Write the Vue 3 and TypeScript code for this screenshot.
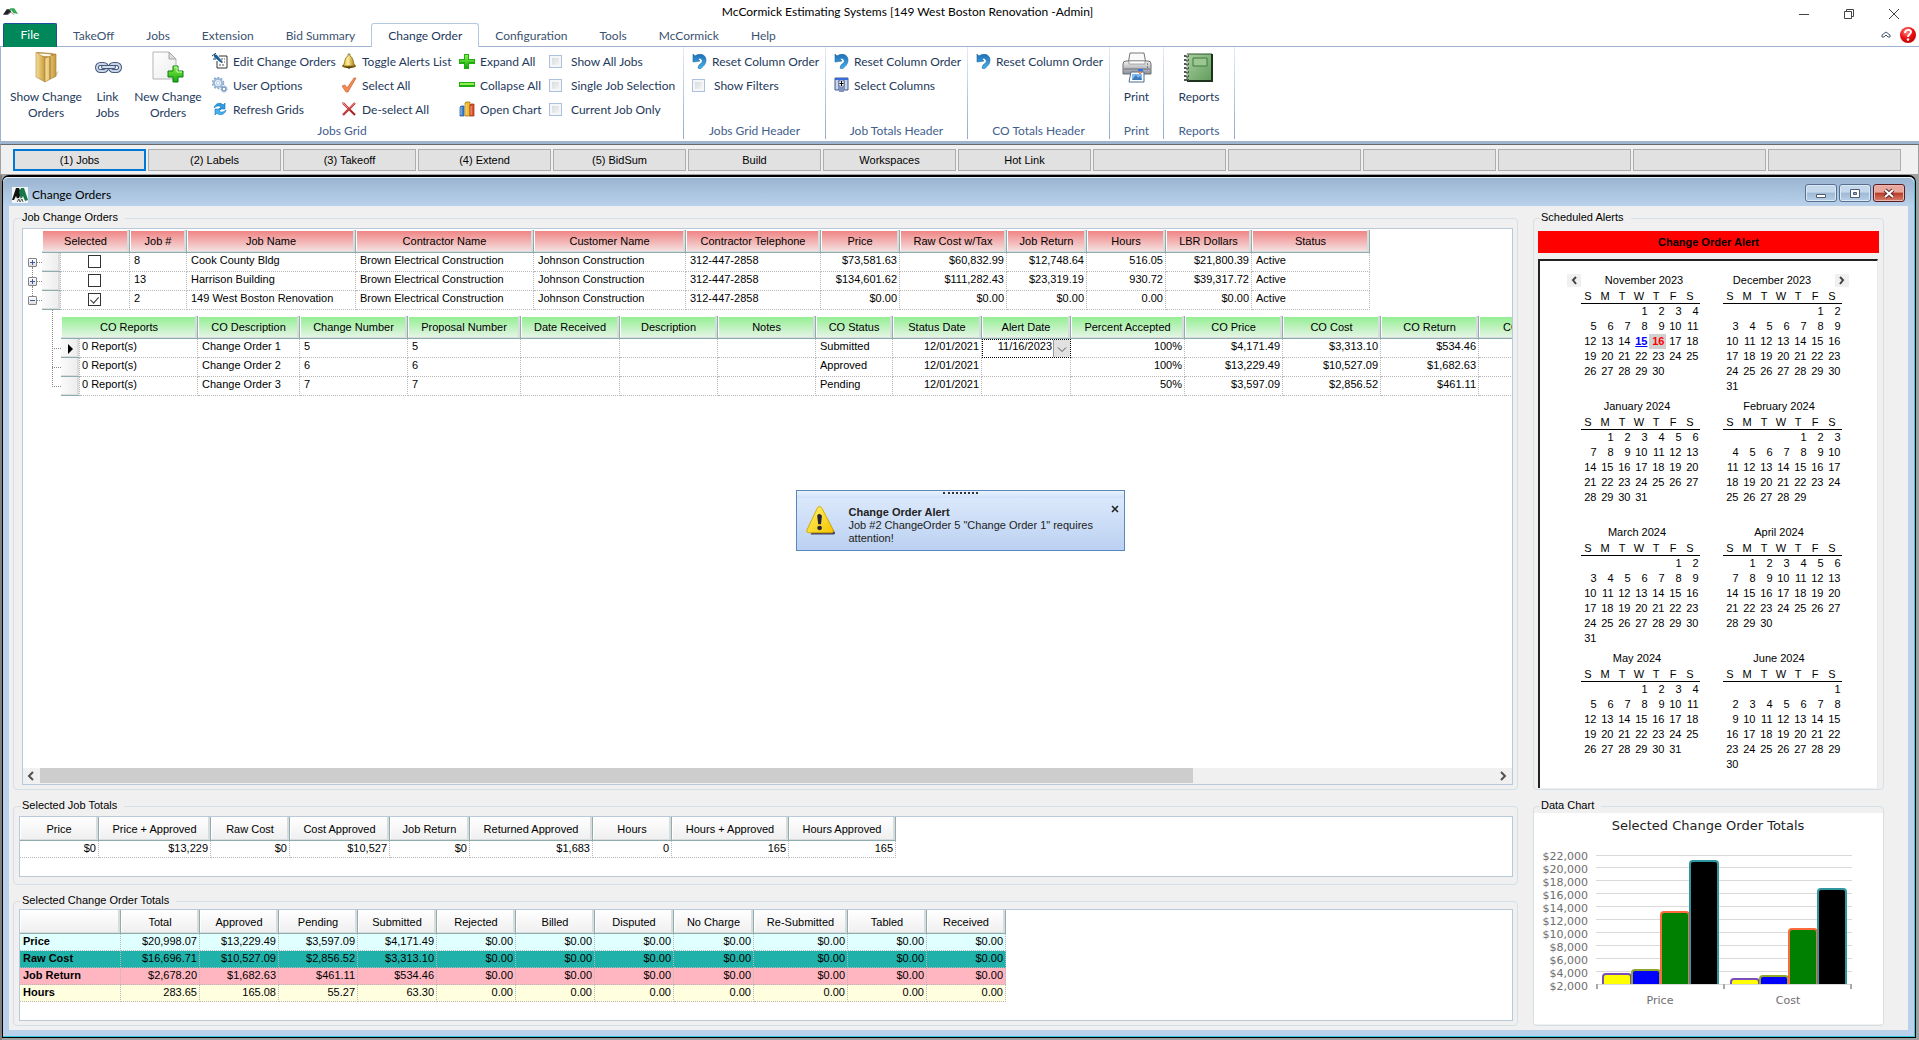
<script setup lang="ts">
import { ref } from 'vue'

interface Column {
  label: string
  width: number
  align?: 'right'
}

interface Command {
  label: string
  icon?: string
}

interface Month {
  name: string
  offset: number
  days: number
}

const tabs = ['TakeOff', 'Jobs', 'Extension', 'Bid Summary', 'Change Order', 'Configuration', 'Tools', 'McCormick', 'Help']
const activeTab = ref('Change Order')

const bigCommands = [
  { lines: ['Show Change', 'Orders'], icon: 'folder', size: 'wide' },
  { lines: ['Link', 'Jobs'], icon: 'link', size: 'narrow' },
  { lines: ['New Change', 'Orders'], icon: 'newdoc', size: 'medium' },
]

const jobCommands: Command[][] = [
  [{ label: 'Edit Change Orders', icon: 'edit' }, { label: 'User Options', icon: 'gears' }, { label: 'Refresh Grids', icon: 'refresh' }],
  [{ label: 'Toggle Alerts List', icon: 'bell' }, { label: 'Select All', icon: 'check' }, { label: 'De-select All', icon: 'cross' }],
  [{ label: 'Expand All', icon: 'plus' }, { label: 'Collapse All', icon: 'minus' }, { label: 'Open Chart', icon: 'bars' }],
]
const jobToggles = ['Show All Jobs', 'Single Job Selection', 'Current Job Only']

const navButtons = ['(1) Jobs', '(2) Labels', '(3) Takeoff', '(4) Extend', '(5) BidSum', 'Build', 'Workspaces', 'Hot Link', '', '', '', '', '', '']

const jobColumns: Column[] = [
  { label: 'Job #', width: 57 },
  { label: 'Job Name', width: 169 },
  { label: 'Contractor Name', width: 178 },
  { label: 'Customer Name', width: 152 },
  { label: 'Contractor Telephone', width: 135 },
  { label: 'Price', width: 79, align: 'right' },
  { label: 'Raw Cost w/Tax', width: 107, align: 'right' },
  { label: 'Job Return', width: 80, align: 'right' },
  { label: 'Hours', width: 79, align: 'right' },
  { label: 'LBR Dollars', width: 86, align: 'right' },
  { label: 'Status', width: 118 },
]
const jobs = ref([
  { selected: false, open: false, cells: ['8', 'Cook County Bldg', 'Brown Electrical Construction', 'Johnson Construction', '312-447-2858', '$73,581.63', '$60,832.99', '$12,748.64', '516.05', '$21,800.39', 'Active'] },
  { selected: false, open: false, cells: ['13', 'Harrison Building', 'Brown Electrical Construction', 'Johnson Construction', '312-447-2858', '$134,601.62', '$111,282.43', '$23,319.19', '930.72', '$39,317.72', 'Active'] },
  { selected: true, open: true, cells: ['2', '149 West Boston Renovation', 'Brown Electrical Construction', 'Johnson Construction', '312-447-2858', '$0.00', '$0.00', '$0.00', '0.00', '$0.00', 'Active'] },
])

const orderColumns: Column[] = [
  { label: 'CO Reports', width: 118 },
  { label: 'CO Description', width: 102 },
  { label: 'Change Number', width: 108 },
  { label: 'Proposal Number', width: 113 },
  { label: 'Date Received', width: 99 },
  { label: 'Description', width: 98 },
  { label: 'Notes', width: 98 },
  { label: 'CO Status', width: 77 },
  { label: 'Status Date', width: 89, align: 'right' },
  { label: 'Alert Date', width: 89, align: 'right' },
  { label: 'Percent Accepted', width: 114, align: 'right' },
  { label: 'CO Price', width: 98, align: 'right' },
  { label: 'CO Cost', width: 98, align: 'right' },
  { label: 'CO Return', width: 98, align: 'right' },
  { label: 'CO Hours', width: 98, align: 'right' },
]
const alertColumn = 9
const orders = [
  ['0 Report(s)', 'Change Order 1', '5', '5', '', '', '', 'Submitted', '12/01/2021', '11/16/2023', '100%', '$4,171.49', '$3,313.10', '$534.46', ''],
  ['0 Report(s)', 'Change Order 2', '6', '6', '', '', '', 'Approved', '12/01/2021', '', '100%', '$13,229.49', '$10,527.09', '$1,682.63', ''],
  ['0 Report(s)', 'Change Order 3', '7', '7', '', '', '', 'Pending', '12/01/2021', '', '50%', '$3,597.09', '$2,856.52', '$461.11', ''],
]

const totalColumns: Column[] = [
  { label: 'Price', width: 79 },
  { label: 'Price + Approved', width: 112 },
  { label: 'Raw Cost', width: 79 },
  { label: 'Cost Approved', width: 100 },
  { label: 'Job Return', width: 80 },
  { label: 'Returned Approved', width: 123 },
  { label: 'Hours', width: 79 },
  { label: 'Hours + Approved', width: 117 },
  { label: 'Hours Approved', width: 107 },
]
const totals = ['$0', '$13,229', '$0', '$10,527', '$0', '$1,683', '0', '165', '165']

const statusColumns: Column[] = [
  { label: 'Total', width: 79 },
  { label: 'Approved', width: 79 },
  { label: 'Pending', width: 79 },
  { label: 'Submitted', width: 79 },
  { label: 'Rejected', width: 79 },
  { label: 'Billed', width: 79 },
  { label: 'Disputed', width: 79 },
  { label: 'No Charge', width: 80 },
  { label: 'Re-Submitted', width: 94 },
  { label: 'Tabled', width: 79 },
  { label: 'Received', width: 79 },
]
const zeros = (text: string) => Array<string>(7).fill(text)
const statusRows = [
  { name: 'Price', tone: 'cyan', values: ['$20,998.07', '$13,229.49', '$3,597.09', '$4,171.49', ...zeros('$0.00')] },
  { name: 'Raw Cost', tone: 'teal', values: ['$16,696.71', '$10,527.09', '$2,856.52', '$3,313.10', ...zeros('$0.00')] },
  { name: 'Job Return', tone: 'pink', values: ['$2,678.20', '$1,682.63', '$461.11', '$534.46', ...zeros('$0.00')] },
  { name: 'Hours', tone: 'cream', values: ['283.65', '165.08', '55.27', '63.30', ...zeros('0.00')] },
]

const weekdays = ['S', 'M', 'T', 'W', 'T', 'F', 'S']
const months: Month[] = [
  { name: 'November 2023', offset: 3, days: 30 },
  { name: 'December 2023', offset: 5, days: 31 },
  { name: 'January 2024', offset: 1, days: 31 },
  { name: 'February 2024', offset: 4, days: 29 },
  { name: 'March 2024', offset: 5, days: 31 },
  { name: 'April 2024', offset: 1, days: 30 },
  { name: 'May 2024', offset: 3, days: 31 },
  { name: 'June 2024', offset: 6, days: 30 },
]

function dayAt(month: Month, week: number, column: number): number | string {
  const day = (week - 1) * 7 + column - month.offset
  return day >= 1 && day <= month.days ? day : ''
}

function dayClass(month: Month, day: number | string) {
  if (month !== months[0]) return ''
  return day === 15 ? 'today' : day === 16 ? 'alerted' : ''
}

const axis = ['$22,000', '$20,000', '$18,000', '$16,000', '$14,000', '$12,000', '$10,000', '$8,000', '$6,000', '$4,000', '$2,000']
const baseline = 171
const bars = [
  { x: 68, top: 161, fill: '#ffff00', edge: '#7b4fb5' },
  { x: 97, top: 157, fill: '#0000ff', edge: '#93a62c' },
  { x: 126, top: 99, fill: '#008000', edge: '#ff6a3c' },
  { x: 155, top: 48, fill: '#000000', edge: '#2f96a0' },
  { x: 196, top: 166, fill: '#ffff00', edge: '#7b4fb5' },
  { x: 225, top: 163, fill: '#0000ff', edge: '#93a62c' },
  { x: 254, top: 116, fill: '#008000', edge: '#ff6a3c' },
  { x: 283, top: 76, fill: '#000000', edge: '#2f96a0' },
]
function barPath(x: number, top: number) {
  return `M${x + 1} ${baseline}V${top + 3}q0 -3 3 -3h22q3 0 3 3V${baseline}`
}

const alertOpen = ref(true)
</script>

<template>
  <div class="app">
    <svg class="symbols" aria-hidden="true">
      <defs>
        <linearGradient id="gGold" x1="0" x2="1"><stop offset="0" stop-color="#f6df9a" /><stop offset="1" stop-color="#c79a3c" /></linearGradient>
        <linearGradient id="gBell" x1="0" x2="1"><stop offset="0" stop-color="#d9a520" /><stop offset=".4" stop-color="#fff0a0" /><stop offset="1" stop-color="#a87405" /></linearGradient>
        <linearGradient id="gGreen" x1="0" y1="0" x2="0" y2="1"><stop offset="0" stop-color="#8df04e" /><stop offset="1" stop-color="#12a80c" /></linearGradient>
        <linearGradient id="gBlue" x1="0" y1="0" x2="0" y2="1"><stop offset="0" stop-color="#1f6fb5" /><stop offset="1" stop-color="#45b4f2" /></linearGradient>
        <linearGradient id="gBook" x1="0" y1="0" x2="1" y2="1"><stop offset="0" stop-color="#a9cf9c" /><stop offset="1" stop-color="#5f9c5c" /></linearGradient>
        <linearGradient id="gPrinter" x1="0" y1="0" x2="0" y2="1"><stop offset="0" stop-color="#f2f2f2" /><stop offset="1" stop-color="#8c8f96" /></linearGradient>
        <linearGradient id="gPage" x1="0" y1="0" x2="1" y2="1"><stop offset="0" stop-color="#fff" /><stop offset="1" stop-color="#ececec" /></linearGradient>
        <linearGradient id="gWarn" x1="0" y1="0" x2="1" y2="1"><stop offset="0" stop-color="#fff36b" /><stop offset="1" stop-color="#f5c400" /></linearGradient>
        <radialGradient id="gHelp" cx=".4" cy=".3" r=".8"><stop offset="0" stop-color="#ff8a8a" /><stop offset=".5" stop-color="#f01010" /><stop offset="1" stop-color="#b00000" /></radialGradient>
      </defs>
      <symbol id="folder" viewBox="0 0 32 32">
        <path d="M20 24l9-4-3 6-6 2z" fill="#d8d8d8" />
        <path d="M7 1l14 1 5 1v22l-9 3z" fill="#b98d3f" />
        <path d="M8 2l13 1 1 3-12-1z" fill="#fffdf0" stroke="#b08a45" stroke-width=".6" />
        <path d="M6 1l9 6v24l-9-5z" fill="url(#gGold)" stroke="#b58a3a" stroke-width=".6" />
        <path d="M15 7l11-4v22l-11 6z" fill="url(#gGold)" stroke="#a9792a" stroke-width=".6" />
        <path d="M20 6v22" stroke="#9a7026" />
      </symbol>
      <symbol id="link" viewBox="0 0 32 32">
        <g fill="none" stroke="#46597c" stroke-width="4"><rect x="5" y="13" width="10" height="7" rx="3.500" /><rect x="18" y="13" width="10" height="7" rx="3.500" /></g>
        <g fill="none" stroke="#c9d5e8" stroke-width="2"><rect x="5" y="13" width="10" height="7" rx="3.500" /><rect x="18" y="13" width="10" height="7" rx="3.500" /></g>
        <path d="M11 16h11" stroke="#46597c" stroke-width="4" stroke-linecap="round" /><path d="M11 16h11" stroke="#d5deec" stroke-width="2" stroke-linecap="round" />
      </symbol>
      <symbol id="newdoc" viewBox="0 0 32 32">
        <path d="M1 1h16l7 7v20H1z" fill="url(#gPage)" stroke="#b4b4b4" /><path d="M17 1v7h7z" fill="#ddd" stroke="#a4a4a4" />
        <path d="M21 15h5v5h5v6h-5v5h-5v-5h-5v-6h5z" fill="url(#gGreen)" stroke="#0b7d12" /><path d="M22 16h3v5h5" fill="none" stroke="#c8ffa8" />
      </symbol>
      <symbol id="edit" viewBox="0 0 16 16">
        <path d="M7 3h8v12H5V8" fill="#fff" stroke="#333" /><path d="M9 6h4M9 9h4M7 12h5" stroke="#555" stroke-dasharray="2 1" />
        <path d="M2 1l3 1 5 6v2l-2-1-6-5z" fill="#1c5f96" /><path d="M0 3l4-3M1 6h3" stroke="#123f66" />
      </symbol>
      <symbol id="gears" viewBox="0 0 16 16">
        <circle cx="6" cy="6" r="4" fill="#eef5fb" stroke="#9ab8d8" stroke-width="2" /><circle cx="6" cy="6" r="5.500" fill="none" stroke="#8aa9cc" stroke-width="1.500" stroke-dasharray="2 1.500" />
        <circle cx="12" cy="12" r="2" fill="#fff" stroke="#7698bf" stroke-width="1.500" /><circle cx="12" cy="12" r="3.300" fill="none" stroke="#9bb3cf" stroke-dasharray="1.200 1" />
        <circle cx="6" cy="6" r="1.600" fill="#fff" stroke="#b8cde2" />
      </symbol>
      <symbol id="refresh" viewBox="0 0 16 16">
        <path d="M2 7c1-5 7-6 9-3l2-2v6H7l2-2C7 4 4 5 2 7z" fill="#2c9be0" stroke="#1673b5" stroke-width=".6" />
        <path d="M14 9c-1 5-7 6-9 3l-2 2V8h6l-2 2c2 2 5 1 7-1z" fill="#46b3f0" stroke="#1673b5" stroke-width=".6" />
      </symbol>
      <symbol id="bell" viewBox="0 0 16 16">
        <ellipse cx="8" cy="13" rx="7" ry="2" fill="#7a5a12" /><path d="M7 1h2v2c3 1 3 5 4 8l1 2H2l1-2c1-3 1-7 4-8z" fill="url(#gBell)" stroke="#80600c" stroke-width=".7" /><path d="M5 14h6l-3 2z" fill="#55410e" />
      </symbol>
      <symbol id="check" viewBox="0 0 16 16"><path d="M1 9l3-1 2 3 7-10h2L7 15H5z" fill="#f58a55" stroke="#cf5d2c" stroke-width=".7" /></symbol>
      <symbol id="cross" viewBox="0 0 16 16"><path d="M2 2l12 12M14 2L2 14" stroke="#c23a3a" stroke-width="2.400" /><path d="M1 1l6 6M8 7l6-5" stroke="#e98f8f" /><path d="M9 9l5 5" stroke="#8c1c1c" /></symbol>
      <symbol id="plus" viewBox="0 0 16 16"><path d="M5 1h5v5h6v5h-6v5H5v-5H0V6h5z" fill="#1fae12" /><path d="M6 2h3v5h6v2H9v6H6V9H1V7h5z" fill="url(#gGreen)" /></symbol>
      <symbol id="minus" viewBox="0 0 16 16"><path d="M0 5h16v5H0z" fill="#1fae12" /><path d="M1 6h14v2H1z" fill="#93ee55" /></symbol>
      <symbol id="bars" viewBox="0 0 16 16">
        <path d="M1 6l1-1h3v10H1z" fill="#3e83d0" stroke="#1f4f91" stroke-width=".7" /><path d="M6 2l1-1h4v14H6z" fill="#f2bc2c" stroke="#9c6b0b" stroke-width=".7" /><path d="M11 4l1-1h3v12h-4z" fill="#e0502a" stroke="#92290f" stroke-width=".7" /><path d="M2 6v8M7 3v11M12 5v9" stroke="#fff" opacity=".5" />
      </symbol>
      <symbol id="reset" viewBox="0 0 16 16">
        <path d="M1 1l2 2c4-3 11-2 11 4 0 4-3 7-6 9l-2-1 1-3c3-2 4-4 3-5-1-2-3-2-4-1l2 2-7 1z" fill="url(#gBlue)" stroke="#1c6aa8" stroke-width=".6" />
      </symbol>
      <symbol id="columns" viewBox="0 0 16 16">
        <path d="M1 1h13v12H1z" fill="#c9d4ea" stroke="#44598c" /><path d="M1 1h13v2H1z" fill="#3a6bd8" /><path d="M5 3v10M10 3v10" stroke="#44598c" /><path d="M5 4h5v5H5z" fill="#fff" stroke="#44598c" stroke-width=".6" /><path d="M7.500 4v5M5.500 6.500h4" stroke="#000" /><path d="M5 10h5v5H5z" fill="#7e93bd" />
      </symbol>
      <symbol id="printer" viewBox="0 0 32 32">
        <path d="M9 2h14l2 11H7z" fill="#fafafa" stroke="#777" /><path d="M2 13q0-3 3-3h22q3 0 3 3v10H2z" fill="url(#gPrinter)" stroke="#6e6e72" />
        <path d="M8 10h16v3H8z" fill="#fff" stroke="#888" stroke-width=".7" /><path d="M3 18h26" stroke="#6b6f78" /><path d="M17 19h5" stroke="#2e72e8" stroke-width="2" />
        <path d="M10 21h13v10H8z" fill="#fff" stroke="#4d6d94" /><path d="M11 23h10v6H11z" fill="#7fb8ee" /><path d="M11 29l4-5 2 3 2-2 2 4z" fill="#3d77b8" /><path d="M17 20l2 3 2-2" stroke="#f07030" fill="none" /><path d="M26 13h1M26 16h1" stroke="#333" />
      </symbol>
      <symbol id="book" viewBox="0 0 32 32">
        <path d="M4 3h25v27H4z" fill="url(#gBook)" stroke="#30532f" /><path d="M29 3v27H4" fill="none" stroke="#1d331d" stroke-width="2" /><path d="M10 7h14v8H10z" fill="#9cc791" stroke="#3d7b3d" />
        <path d="M1 5h5M1 9h5M1 13h5M1 17h5M1 21h5M1 25h5M1 29h5" stroke="#555" stroke-width="2" stroke-dasharray="3 1" /><path d="M3 4h2M3 8h2M3 12h2M3 16h2M3 20h2M3 24h2" stroke="#fff" />
      </symbol>
      <symbol id="logo" viewBox="0 0 16 16"><path d="M0 0h16v16H0z" fill="#f4f6f4" /><path d="M0 13L4 1h3l2 5-3 8-2-5-2 4z" fill="#111" /><path d="M7 5l2-4h3l4 12-3 1-2-5-2 4z" fill="#17774a" /><path d="M4 15l2-4 2 4 2-4 3 4" stroke="#fff" fill="none" /><path d="M5 15l2-3 1 3 2-3 1 3" stroke="#222" stroke-width=".7" fill="none" /></symbol>
      <symbol id="applogo" viewBox="0 0 16 10"><path d="M0 8l4-6h3l2 3-4 3z" fill="#222" /><path d="M6 3l2-2h4l4 6-5-1-2-3z" fill="#35a853" /><path d="M5 8l3-3 4 3" stroke="#999" fill="none" /></symbol>
    </svg>

    <header class="titlebar">
      <svg class="applogo"><use href="#applogo" /></svg>
      <h1>McCormick Estimating Systems [149 West Boston Renovation -Admin]</h1>
      <div class="syscontrols">
        <button type="button" aria-label="Minimize"><svg viewBox="0 0 10 10"><path d="M0 5.500h10" /></svg></button>
        <button type="button" aria-label="Restore"><svg viewBox="0 0 10 10"><path d="M.5 2.500h7v7h-7zM2.500 2.500v-2h7v7h-2" /></svg></button>
        <button type="button" aria-label="Close"><svg viewBox="0 0 10 10"><path d="M0 0l10 10M10 0L0 10" /></svg></button>
      </div>
    </header>

    <nav class="tabs">
      <button type="button" class="file">File</button>
      <button v-for="tab in tabs" :key="tab" type="button" class="tab" :class="{ active: tab === activeTab }" @click="activeTab = tab">{{ tab }}</button>
      <div class="tabtools">
        <button type="button" aria-label="Collapse ribbon"><svg width="10" height="8" viewBox="0 0 10 8"><path d="M1 4l4-3 4 3v2L7 6 5 4 3 6 1 6z" fill="#fff" stroke="#46566b" /></svg></button>
        <button type="button" aria-label="Help" class="help"><svg width="16" height="16" viewBox="0 0 16 16"><circle cx="8" cy="8" r="8" fill="url(#gHelp)" /><path d="M5 6c0-4 6-4 6-1 0 2-3 2-3 5" fill="none" stroke="#fff" stroke-width="2" /><circle cx="8" cy="12.500" r="1.300" fill="#fff" /></svg></button>
      </div>
    </nav>

    <div class="ribbon">
      <section class="group jobs">
        <div class="commands">
          <button v-for="cmd in bigCommands" :key="cmd.icon" type="button" class="big" :class="cmd.size">
            <svg><use :href="'#' + cmd.icon" /></svg>
            <span v-for="line in cmd.lines" :key="line">{{ line }}</span>
          </button>
          <div v-for="(column, i) in jobCommands" :key="i" class="stack" :class="'stack' + i">
            <button v-for="cmd in column" :key="cmd.label" type="button" class="small"><svg><use :href="'#' + cmd.icon" /></svg>{{ cmd.label }}</button>
          </div>
          <div class="stack">
            <label v-for="toggle in jobToggles" :key="toggle" class="toggle"><input type="checkbox">{{ toggle }}</label>
          </div>
        </div>
        <h2>Jobs Grid</h2>
      </section>
      <section class="group header">
        <div class="commands"><div class="stack">
          <button type="button" class="small"><svg><use href="#reset" /></svg>Reset Column Order</button>
          <label class="toggle"><input type="checkbox">Show Filters</label>
        </div></div>
        <h2>Jobs Grid Header</h2>
      </section>
      <section class="group header">
        <div class="commands"><div class="stack">
          <button type="button" class="small"><svg><use href="#reset" /></svg>Reset Column Order</button>
          <button type="button" class="small"><svg><use href="#columns" /></svg>Select Columns</button>
        </div></div>
        <h2>Job Totals Header</h2>
      </section>
      <section class="group header">
        <div class="commands"><div class="stack">
          <button type="button" class="small"><svg><use href="#reset" /></svg>Reset Column Order</button>
        </div></div>
        <h2>CO Totals Header</h2>
      </section>
      <section class="group print">
        <div class="commands"><button type="button" class="big fill"><svg><use href="#printer" /></svg><span>Print</span></button></div>
        <h2>Print</h2>
      </section>
      <section class="group reports">
        <div class="commands"><button type="button" class="big fill"><svg><use href="#book" /></svg><span>Reports</span></button></div>
        <h2>Reports</h2>
      </section>
    </div>

    <nav class="steps">
      <button v-for="(label, i) in navButtons" :key="i" type="button" :class="{ current: i === 0 }">{{ label }}</button>
    </nav>

    <div class="desktop">
      <div class="window">
        <header class="caption">
          <svg class="winlogo"><use href="#logo" /></svg>
          <h2>Change Orders</h2>
          <button type="button" aria-label="Minimize window"><svg viewBox="0 0 14 12"><path d="M2.500 6.500h9v3h-9z" fill="#fff" stroke="#4c5c70" /></svg></button>
          <button type="button" aria-label="Maximize window"><svg viewBox="0 0 14 12"><path d="M2.500 1.500h9v8h-9z" fill="#fff" stroke="#4c5c70" /><path d="M5.500 4.500h3v2h-3z" fill="#9ab4d2" stroke="#4c5c70" /></svg></button>
          <button type="button" aria-label="Close window" class="close"><svg viewBox="0 0 14 12"><path d="M3 2l8 7M11 2L3 9" stroke="#5b2a2a" stroke-width="4" /><path d="M3 2l8 7M11 2L3 9" stroke="#fff" stroke-width="2" /></svg></button>
        </header>

        <main class="client">
          <div class="left">
            <fieldset class="orders">
              <legend>Job Change Orders</legend>
              <div class="gridbox">
                <div class="scrollarea">
                  <table class="grid red">
                    <colgroup><col class="treecol"><col class="selcol"><col class="checkcol"><col v-for="c in jobColumns" :key="c.label" :style="{ width: c.width + 'px' }"></colgroup>
                    <thead><tr><td class="blank"></td><th colspan="2">Selected</th><th v-for="c in jobColumns" :key="c.label">{{ c.label }}</th></tr></thead>
                    <tbody>
                      <tr v-for="job in jobs" :key="job.cells[0]">
                        <td class="blank node"><button type="button" :aria-label="job.open ? 'Collapse' : 'Expand'" :class="{ shut: !job.open }" @click="job.open = !job.open"></button></td>
                        <td class="rowhead"></td>
                        <td class="pick"><input v-model="job.selected" type="checkbox" :aria-label="'Select ' + job.cells[1]"></td>
                        <td v-for="(cell, i) in job.cells" :key="i" :class="jobColumns[i].align">{{ cell }}</td>
                      </tr>
                    </tbody>
                  </table>
                  <div v-if="jobs[2].open" class="child">
                    <table class="grid green">
                      <colgroup><col class="branchcol"><col class="selcol"><col v-for="c in orderColumns" :key="c.label" :style="{ width: c.width + 'px' }"></colgroup>
                      <thead><tr><td class="blank"></td><th colspan="2">CO Reports</th><th v-for="c in orderColumns.slice(1)" :key="c.label">{{ c.label }}</th></tr></thead>
                      <tbody>
                        <tr v-for="(order, r) in orders" :key="r">
                          <td class="blank branch"></td>
                          <td class="rowhead"><i v-if="r === 0" class="marker"></i></td>
                          <td v-for="(cell, i) in order" :key="i" :class="[orderColumns[i].align, { editing: r === 0 && i === alertColumn }]">
                            <template v-if="r === 0 && i === alertColumn"><select aria-label="Alert date"><option>{{ cell }}</option></select><svg class="drop" viewBox="0 0 16 16"><path d="M4 7l4 4 4-4" fill="none" stroke="#555" /></svg></template>
                            <template v-else>{{ cell }}</template>
                          </td>
                        </tr>
                      </tbody>
                    </table>
                  </div>
                </div>
                <div class="scrollbar">
                  <button type="button" aria-label="Scroll left"><svg viewBox="0 0 16 16"><path d="M10 4L6 8l4 4" /></svg></button>
                  <div class="track"><div class="thumb"></div></div>
                  <button type="button" aria-label="Scroll right"><svg viewBox="0 0 16 16"><path d="M6 4l4 4-4 4" /></svg></button>
                </div>
              </div>
            </fieldset>

            <fieldset class="jobtotals">
              <legend>Selected Job Totals</legend>
              <div class="gridbox">
                <table class="grid plain compact">
                  <colgroup><col v-for="c in totalColumns" :key="c.label" :style="{ width: c.width + 'px' }"></colgroup>
                  <thead><tr><th v-for="c in totalColumns" :key="c.label">{{ c.label }}</th></tr></thead>
                  <tbody><tr><td v-for="(v, i) in totals" :key="i" class="right">{{ v }}</td></tr></tbody>
                </table>
              </div>
            </fieldset>

            <fieldset class="statustotals">
              <legend>Selected Change Order Totals</legend>
              <div class="gridbox">
                <table class="grid plain compact">
                  <colgroup><col class="namecol"><col v-for="c in statusColumns" :key="c.label" :style="{ width: c.width + 'px' }"></colgroup>
                  <thead><tr><th></th><th v-for="c in statusColumns" :key="c.label">{{ c.label }}</th></tr></thead>
                  <tbody>
                    <tr v-for="row in statusRows" :key="row.name" :class="row.tone">
                      <td class="name">{{ row.name }}</td><td v-for="(v, i) in row.values" :key="i" class="right">{{ v }}</td>
                    </tr>
                  </tbody>
                </table>
              </div>
            </fieldset>
          </div>

          <div class="side">
            <fieldset class="alerts">
              <legend>Scheduled Alerts</legend>
              <div class="alertbar">Change Order Alert</div>
              <div class="calendar">
                <div class="months">
                  <button type="button" class="prev" aria-label="Previous month"><svg viewBox="0 0 14 13"><path d="M9 3L6 6l3 4" /></svg></button>
                  <button type="button" class="next" aria-label="Next month"><svg viewBox="0 0 14 13"><path d="M5 3l3 3-3 4" /></svg></button>
                  <table v-for="(month, m) in months" :key="month.name" class="month" :class="{ first: m === 0, second: m === 1 }">
                    <caption>{{ month.name }}</caption>
                    <thead><tr><th v-for="(d, i) in weekdays" :key="i">{{ d }}</th></tr></thead>
                    <tbody>
                      <tr v-for="week in 6" :key="week">
                        <td v-for="n in 7" :key="n" :class="dayClass(month, dayAt(month, week, n))">{{ dayAt(month, week, n) }}</td>
                      </tr>
                    </tbody>
                  </table>
                </div>
              </div>
            </fieldset>

            <fieldset class="chartbox">
              <legend>Data Chart</legend>
              <svg class="chart" viewBox="0 0 349 211">
                <text class="charttitle" x="174" y="17">Selected Change Order Totals</text>
                <g v-for="(label, i) in axis" :key="label">
                  <path :d="`M62 ${42.5 + i * 13 - (i ? 1 : 0)}H318`" stroke="#d9d9d9" />
                  <text class="tick" x="54" :y="47 + i * 13">{{ label }}</text>
                </g>
                <path v-for="bar in bars" :key="bar.x" :d="barPath(bar.x, bar.top)" :fill="bar.fill" :stroke="bar.edge" stroke-width="2" />
                <path d="M63 171v5M190 171v5M317 171v5" stroke="#a8a8a8" stroke-width="2" />
                <text class="category" x="126" y="191">Price</text>
                <text class="category" x="254" y="191">Cost</text>
              </svg>
            </fieldset>
          </div>
        </main>
      </div>
    </div>

    <div v-if="alertOpen" class="toast" role="alert">
      <div class="grip"><i></i></div>
      <div class="toastbody">
        <svg class="warn" viewBox="0 0 32 32"><path d="M16 3L31 29q0 2-3 2H5z" fill="#44405e" /><path d="M14 1q2 0 3 2l12 23q1 3-2 3H3q-3 0-2-3L12 3q1-2 2-2z" fill="url(#gWarn)" stroke="#d3a800" /><path d="M12 11q0-2 2-2t3 2l-1 9h-3z" fill="#252239" /><ellipse cx="14.500" cy="24" rx="2.500" ry="2.300" fill="#252239" /></svg>
        <p><strong>Change Order Alert</strong><br>Job #2 ChangeOrder 5 "Change Order 1" requires attention!</p>
        <button type="button" aria-label="Dismiss alert" @click="alertOpen = false"><svg viewBox="0 0 8 8"><path d="M1 1l6 6M7 1L1 7" stroke="#222" stroke-width="1.500" /></svg></button>
      </div>
    </div>
  </div>
</template>

<style>
html, body { margin: 0; background: #fff; }
</style>

<style scoped>
.app { position: relative; display: flex; flex-direction: column; min-height: 100vh; box-sizing: border-box; overflow: hidden; font-family: "Liberation Sans", Arial, sans-serif; font-size: 11px; color: #000; }
.app *, .app *::before, .app *::after { box-sizing: border-box; }
button { margin: 0; padding: 0; border: 0; background: none; font: inherit; color: inherit; }
h1, h2, p { margin: 0; font-weight: normal; }
.symbols { position: absolute; width: 0; height: 0; }

.titlebar, .tabs, .ribbon, .caption h2 { font-family: Lato, "Segoe UI", sans-serif; font-size: 12px; }
.titlebar { display: grid; grid-template-columns: 38px 1fr 142px; height: 23px; align-items: center; }
.titlebar h1 { text-align: center; font-size: 12px; line-height: 23px; }
.applogo { width: 15px; height: 10px; margin-left: 3px; }
.syscontrols { display: flex; gap: 35px; padding-top: 5px; margin-left: 22px; }
.syscontrols button { width: 10px; height: 10px; }
.syscontrols svg { display: block; width: 10px; height: 10px; fill: none; stroke: #444; overflow: visible; }

.tabs { display: flex; height: 24px; padding-left: 3px; border-bottom: 1px solid #9fb4cf; color: #3b526f; }
.file { width: 54px; height: 24px; padding-bottom: 2px; background: #00875a; border: 1px solid #1b4f9c; border-bottom: 0; border-radius: 2px 2px 0 0; color: #fff; }
.tab { height: 24px; padding: 0 15px 1px; border: 1px solid transparent; border-bottom: 0; }
.tab.active { padding: 0 16px 1px; background: #fff; border-color: #b4c8e0; border-radius: 3px 3px 0 0; color: #1e395b; }
.tabtools { display: flex; align-items: center; gap: 9px; margin-left: auto; padding-right: 3px; }
.tabtools button, .tabtools svg { display: block; }

.ribbon { display: flex; height: 97px; border-left: 1px solid #9fb4cf; border-bottom: 3px solid #9fb4cf; color: #1e395b; }
.group { height: 92px; padding-top: 3px; border-right: 1px solid; border-image: linear-gradient(#e4edf7, #8fa9cb) 1; flex: none; }
.group h2 { height: 18px; line-height: 18px; font-size: 12px; text-align: center; color: #41608c; }
.group.jobs { width: 683px; }
.group.header { width: 142px; }
.group.header .commands { padding-left: 8px; }
.group.header .small { gap: 4px; }
.group.print { width: 54px; }
.group.reports { width: 71px; }
.commands { display: flex; height: 72px; }
.big { display: flex; flex-direction: column; align-items: center; padding-top: 1px; line-height: 16px; white-space: nowrap; }
.big svg { width: 32px; height: 32px; margin-bottom: 6px; flex: none; }
.wide { width: 90px; }
.narrow { width: 33px; }
.medium { width: 88px; }
.fill { width: 100%; }
.stack { display: flex; flex-direction: column; margin-top: -1px; }
.stack0 { width: 129px; }
.stack1 { width: 118px; }
.stack2 { width: 90px; }
.small, .toggle { display: flex; align-items: center; gap: 5px; height: 24px; white-space: nowrap; }
.small svg { width: 16px; height: 16px; flex: none; }
.toggle { gap: 9px; }
.toggle input { appearance: none; width: 13px; height: 13px; margin: 0; border: 1px solid #abc1de; background: linear-gradient(135deg, #cfd4da, #fafafa); box-shadow: inset 0 0 0 2px #f4f6f8; }

.steps { display: grid; grid-template-columns: repeat(14, minmax(0, 1fr)); gap: 2px; height: 31px; padding: 4px 17px 4px 12px; background: #f0f0f0; border: 1px solid #a0a0a0; border-top-color: #696969; }
.steps button { height: 22px; padding-bottom: 1px; background: #e1e1e1; border: 1px solid #adadad; }
.steps .current { border: 2px solid #0078d7; }

.desktop { flex: 1; display: flex; padding: 0 3px 2px 0; border-left: 2px solid #808080; background: #a0a0a0; }
.window { flex: 1; min-width: 0; display: flex; flex-direction: column; border: 1px solid #000; border-top-width: 2px; border-radius: 7px 7px 0 0; background: #b9d1ea; box-shadow: inset -1px -1px 0 #35c8dd; padding: 0 7px 7px 6px; }
.caption { display: flex; align-items: center; gap: 2px; height: 29px; margin: 0 -6px; padding: 6px 9px 0 9px; border-radius: 5px 5px 0 0; background: linear-gradient(#99b4d1, #b9d1ea); box-shadow: inset 0 1px 0 #e5f2fb; }
.caption h2 { flex: 1; padding-left: 2px; }
.winlogo { width: 16px; height: 16px; }
.caption button { width: 32px; height: 18px; border: 1px solid #56708f; border-radius: 3px; background: linear-gradient(#c5d7ea 45%, #9fb9d5 50%, #b8cfe7); box-shadow: inset 0 0 0 1px #dce9f5; margin-top: -3px; }
.caption button svg { display: block; width: 14px; height: 12px; margin: 1px auto 0; }
.caption .close { border-color: #5a1c22; background: linear-gradient(#e9a79d 45%, #b83b26 50%, #d88070); box-shadow: inset 0 0 0 1px #e9b9b0; }

.client { flex: 1; display: flex; gap: 15px; padding: 5px 24px 4px 4px; background: #f0f0f0; }
.left { flex: 1; min-width: 0; display: flex; flex-direction: column; gap: 9px; }
.side { width: 351px; flex: none; display: flex; flex-direction: column; gap: 9px; }
fieldset { display: flex; flex-direction: column; min-width: 0; margin: 0; padding: 3px 4px 4px 8px; border: 1px solid #d5dfe5; border-radius: 4px; }
legend { height: 14px; line-height: 12px; margin-left: -1px; padding: 0 7px 0 1px; }
.orders, .alerts { flex: 1; }
.jobtotals, .statustotals { padding-left: 5px; }
.jobtotals legend, .statustotals legend { margin-left: 2px; }
.jobtotals { padding-bottom: 7px; }
.statustotals { padding-top: 1px; }
.gridbox { flex: 1; min-height: 0; display: flex; flex-direction: column; overflow: hidden; border: 1px solid #b9c9d9; background: #fff; }
.jobtotals .gridbox { flex: none; height: 61px; }
.statustotals .gridbox { flex: none; height: 112px; }
.scrollarea { flex: 1; overflow: hidden; padding-top: 1px; }
.scrollbar { display: flex; height: 16px; background: #f0f0f0; }
.scrollbar button { width: 17px; height: 16px; }
.scrollbar svg { display: block; width: 16px; height: 16px; fill: none; stroke: #505050; stroke-width: 2; }
.track { flex: 1; display: grid; grid-template-columns: 1155fr 302fr; }
.thumb { height: 15px; background: #cdcdcd; }

.grid { width: 1px; table-layout: fixed; border-collapse: separate; border-spacing: 0; }
.treecol, .selcol { width: 19px; }
.checkcol { width: 69px; }
.branchcol { width: 9px; }
.namecol { width: 101px; }
th { font-weight: normal; }
.grid th { height: 23px; padding: 0; white-space: nowrap; border-right: 1px solid #8fadad; border-bottom: 1px solid #8fadad; box-shadow: inset -2px -1px 0 #d8dcdc, inset 1px 1px 0 #fff; }
.red th { background: linear-gradient(#f08080, #f5e4e4); }
.green th { background: linear-gradient(#90ee90, #e8f5e8); }
.grid.plain th { height: 24px; padding-top: 1px; background: linear-gradient(#fff, #efefef); }
.grid td { height: 19px; padding: 1px 2px 0 4px; line-height: 13px; vertical-align: top; white-space: nowrap; border-right: 1px dotted #b8b8b8; border-bottom: 1px dotted #b8b8b8; }
.grid .right { text-align: right; }
.grid .blank { position: relative; padding: 0; border: 0; }
.grid .rowhead { padding: 0; background: linear-gradient(90deg, #fafafa, #ececec); border-bottom: 1px solid #8fadad; box-shadow: inset -2px -1px 0 #dcdcdc; }
.green .rowhead + td { padding-left: 2px; }
.grid.compact td { height: 17px; line-height: 12px; }
.grid .name { padding-left: 3px; font-weight: bold; }
.cyan td { background: #e0ffff; }
.teal td { background: #20b2aa; }
.pink td { background: #ffb6c1; }
.cream td { background: #ffffe0; }
.grid .pick { padding: 2px 2px 0 0; text-align: center; }
.pick input { display: block; position: relative; appearance: none; width: 13px; height: 13px; margin: 0 auto; border: 1px solid #333; background: #fff; }
.pick input:checked::after { content: ""; position: absolute; left: 3px; top: 1px; width: 5px; height: 8px; border: solid #333; border-width: 0 1px 1px 0; rotate: 42deg; }
.node button { position: relative; z-index: 1; display: block; width: 9px; height: 9px; margin: 5px 0 0 5px; border: 1px solid #848484; border-radius: 1px; background: linear-gradient(#fff, #ddd); }
.node button::before, .node .shut::after { content: ""; position: absolute; left: 1px; top: 3px; width: 5px; height: 1px; background: #3b5ba0; }
.node .shut::after { rotate: 90deg; }
.node::before { content: ""; position: absolute; left: 14px; top: 9px; width: 5px; border-top: 1px dotted #888; }
tr + tr .node::after { content: ""; position: absolute; left: 9px; top: -5px; height: 10px; border-left: 1px dotted #888; }
.child { position: relative; margin-left: 29px; padding-top: 6px; }
.child::before { content: ""; position: absolute; left: 0; top: 0; height: 77px; border-left: 1px dotted #888; }
.branch::before { content: ""; position: absolute; left: 0; top: 9px; width: 9px; border-top: 1px dotted #888; }
.marker { display: block; width: 0; height: 0; margin: 5px 0 0 7px; border: 5px solid transparent; border-left-color: #000; border-right: 0; }
.grid .editing { position: relative; padding: 0; border: 1px dotted #000; }
.editing select { appearance: none; display: block; width: 70px; height: 13px; padding: 0 1px; border: 0; background: none; font: inherit; color: inherit; text-align: right; text-align-last: right; border-radius: 0; }
.drop { position: absolute; right: 0; top: 0; width: 17px; height: 17px; background: #e1e1e1; border-left: 1px solid #999; }

.alerts { padding: 6px 4px 1px 4px; }
.alertbar { height: 22px; margin-bottom: 6px; background: #f00; font-weight: bold; line-height: 22px; text-align: center; }
.calendar { flex: 1; display: flex; justify-content: center; padding-top: 11px; margin-right: 1px; background: #fff; border: 2px solid #222; border-right: 1px solid #e8e8e8; border-bottom: 0; }
.months { position: relative; display: grid; grid-template-columns: 119px 119px; column-gap: 23px; row-gap: 4px; align-content: start; margin-left: 5px; }
.month { width: 119px; table-layout: fixed; border-collapse: separate; border-spacing: 0; }
.month caption { height: 16px; padding-right: 6px; line-height: 16px; }
.month.first caption { padding: 0 0 0 8px; }
.month.second caption { padding-right: 20px; }
.month th { height: 16px; padding: 1px 2px 0 0; line-height: 14px; border-bottom: 1px solid #000; }
.month td { height: 15px; padding: 0 1px 0 0; line-height: 15px; text-align: right; }
.month .today { color: #00f; font-weight: bold; text-decoration: underline; }
.month .alerted { color: #f00; font-weight: bold; background: #d0d0d0; }
.months button { position: absolute; top: 2px; width: 14px; height: 13px; background: #f0f0f0; }
.months .prev { left: -14px; }
.months .next { right: -7px; }
.months button svg { display: block; width: 14px; height: 13px; fill: none; stroke: #444; stroke-width: 2; }

.chartbox { height: 227px; padding: 0; }
.chartbox legend { margin-left: 6px; }
.alerts legend { margin-left: 2px; }
.chart { display: block; width: 100%; height: 211px; background: #fff; font-family: "DejaVu Sans", Verdana, sans-serif; font-size: 11px; }
.charttitle { font-size: 13px; text-anchor: middle; fill: #222; }
.tick { text-anchor: end; fill: #6e6e6e; }
.category { text-anchor: middle; fill: #6e6e6e; }

.toast { position: absolute; left: calc(50% - 164px); top: calc(50% - 30px); width: 329px; height: 61px; border: 1px solid #5a87bd; background: linear-gradient(#dfebfc, #bbd1f1); color: #222; }
.grip { height: 7px; padding-top: 1px; background: linear-gradient(#eaf2fd, #cfe0fa); }
.grip i { display: block; width: 35px; margin: 0 auto; border-top: 2px dotted #333; }
.toastbody { display: flex; align-items: flex-start; padding: 7px 5px 0 9px; }
.warn { width: 30px; height: 31px; margin-right: 13px; flex: none; }
.toastbody p { flex: 1; line-height: 13px; padding-top: 1px; }
.toastbody button { width: 8px; height: 8px; }
.toastbody button svg { display: block; width: 8px; height: 8px; }
</style>
